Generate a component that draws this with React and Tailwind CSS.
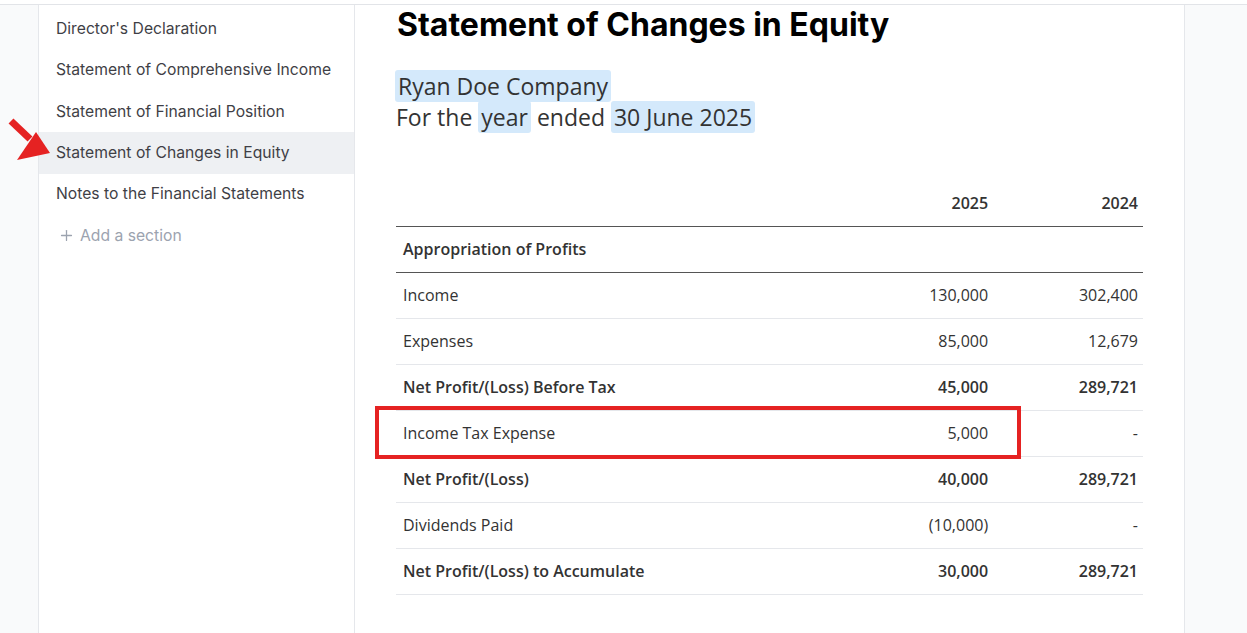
import React from 'react';
import { Plus } from 'lucide-react';

const sections = [
  "Director's Declaration",
  'Statement of Comprehensive Income',
  'Statement of Financial Position',
  'Statement of Changes in Equity',
  'Notes to the Financial Statements',
];

const rows = [
  { label: 'Income', a: '130,000', b: '302,400' },
  { label: 'Expenses', a: '85,000', b: '12,679' },
  { label: 'Net Profit/(Loss) Before Tax', a: '45,000', b: '289,721', bold: true },
  { label: 'Income Tax Expense', a: '5,000', b: '-' },
  { label: 'Net Profit/(Loss)', a: '40,000', b: '289,721', bold: true },
  { label: 'Dividends Paid', a: '(10,000)', b: '-' },
  { label: 'Net Profit/(Loss) to Accumulate', a: '30,000', b: '289,721', bold: true },
];

function Sidebar() {
  return (
    <aside className="w-[316px] shrink-0 border-r border-[#e5e7eb] bg-white" style={{ fontFamily: 'Inter, sans-serif' }}>
      <ul className="text-[15.7px] text-[#3f3f46] pt-[3px]">
        {sections.map((s, i) => (
          <li
            key={s}
            className={`h-[41.4px] flex items-center pl-[17px] ${i === 3 ? 'bg-[#eef0f3]' : ''}`}
          >
            {s}
          </li>
        ))}
        <li className="h-[41.4px] flex items-center pl-[19px] text-[#9ca3af] gap-[5px]">
          <Plus size={17} strokeWidth={1.8} />
          <span>Add a section</span>
        </li>
      </ul>
    </aside>
  );
}

function Hl({ children }) {
  return <span className="bg-[#d4e9fb] rounded-[3px] px-[3px]">{children}</span>;
}

export default function App() {
  return (
    <div className="relative h-[633px] w-[1247px] overflow-hidden bg-white">
      <div className="h-[5px] border-b border-[#e2e4e8] bg-white" />
      <div className="flex h-[628px]">
        <div className="w-[39px] shrink-0 bg-[#f9fafb] border-r border-[#e5e7eb]" />
        <Sidebar />
        <main className="flex-1 pl-[41px] relative">
          <h1
            className="text-[32px] font-bold text-black leading-[40px] ml-[1px]"
            style={{ fontFamily: 'Inter, sans-serif' }}
          >
            Statement of Changes in Equity
          </h1>
          <div
            className="mt-[26px] text-[23px] leading-[31px] text-[#333] font-medium"
            style={{ fontFamily: '"Open Sans", sans-serif' }}
          >
            <div className="-ml-[1px]"><Hl>Ryan Doe Company</Hl></div>
            <div>For the <Hl>year</Hl> ended <Hl>30 June 2025</Hl></div>
          </div>
          <table
            className="mt-[48px] w-[747px] border-collapse text-[16px] text-[#333]"
            style={{ fontFamily: '"Open Sans", sans-serif' }}
          >
            <thead>
              <tr className="h-[45px] border-b border-[#555]">
                <th className="w-[448px]" />
                <th className="w-[150px] text-right pr-[5px] font-semibold">2025</th>
                <th className="w-[150px] text-right pr-[5px] font-semibold">2024</th>
              </tr>
            </thead>
            <tbody>
              <tr className="h-[46px] border-b border-[#555]">
                <td className="pl-[7px] font-semibold" colSpan={3}>Appropriation of Profits</td>
              </tr>
              {rows.map((r) => (
                <tr key={r.label} className={`h-[46px] border-b border-[#e5e7eb] ${r.bold ? 'font-semibold' : ''}`}>
                  <td className="pl-[7px]">{r.label}</td>
                  <td className="text-right pr-[5px]">{r.a}</td>
                  <td className="text-right pr-[5px]">{r.b}</td>
                </tr>
              ))}
            </tbody>
          </table>
        </main>
        <div className="w-[63px] shrink-0 bg-[#f9fafb] border-l border-[#e5e7eb]" />
      </div>

      {/* annotation: highlight box */}
      <div className="absolute left-[375px] top-[406px] w-[646px] h-[53px] border-[4px] border-[#e52222] pointer-events-none" />

      {/* annotation: arrow */}
      <svg className="absolute left-0 top-[112px] pointer-events-none" width="60" height="50" viewBox="0 0 60 50">
        <line x1="11" y1="9" x2="30" y2="27" stroke="#e52222" strokeWidth="7" />
        <polygon points="50,41 17,48 36,20" fill="#e52222" />
      </svg>
    </div>
  );
}
